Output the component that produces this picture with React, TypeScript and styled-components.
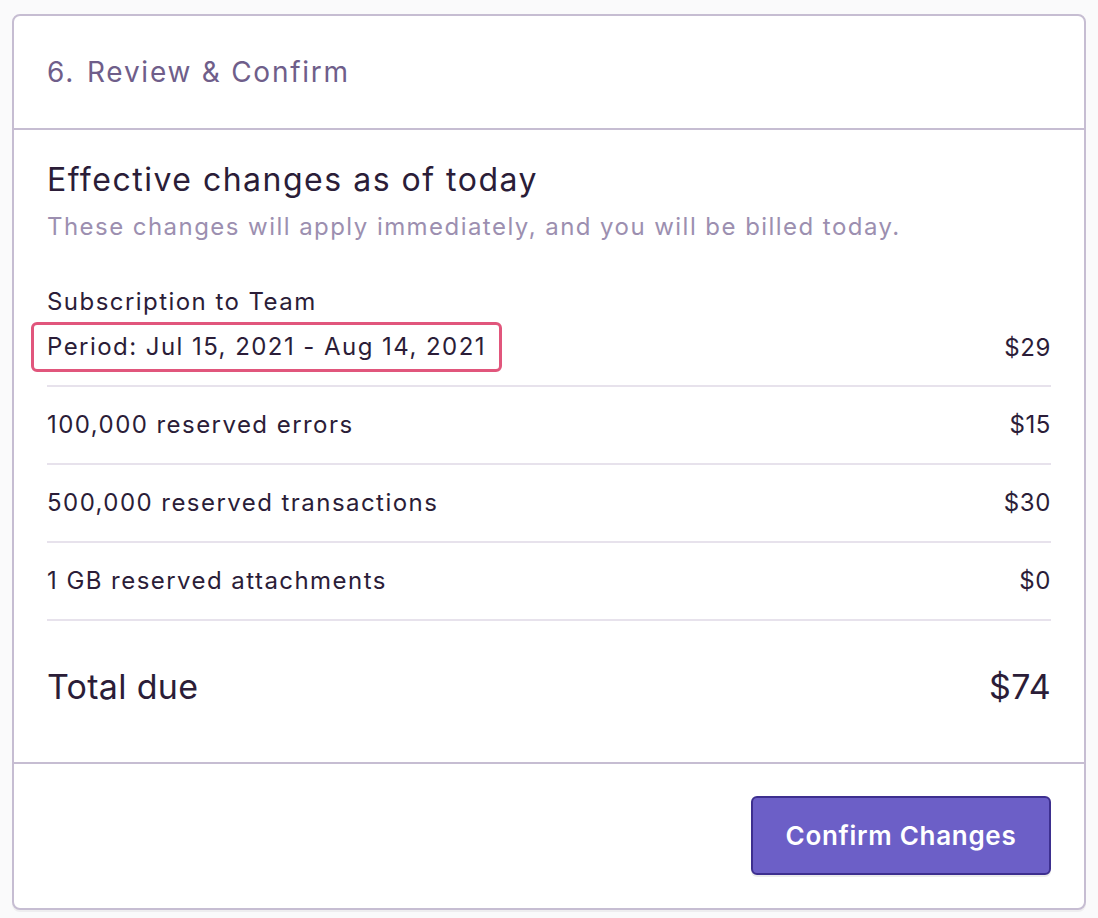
import React from "react";
import styled, { createGlobalStyle } from "styled-components";

const Global = createGlobalStyle`
  html, body { margin: 0; padding: 0; background: #fafafb; }
  body { font-family: Inter, "Noto Sans", sans-serif; color: #2b1d38; }
  * { box-sizing: border-box; }
`;

const Page = styled.div`
  padding: 14px 12px 6px 12px;
`;

const Card = styled.section`
  width: 1074px;
  background: #fff;
  border: 2px solid #c6bdd2;
  border-radius: 8px;
  box-shadow: 0 2px 0 rgba(43, 29, 56, 0.06);
  overflow: hidden;
`;

const Header = styled.header`
  height: 114px;
  display: flex;
  align-items: center;
  padding: 0 33px;
  border-bottom: 2px solid #c6bdd2;
  font-size: 28px;
  color: #6f5e8a;
  letter-spacing: 1.75px;
`;

const StepNum = styled.span`
  margin-right: 12px;
`;

const Body = styled.div`
  padding: 30px 33px 55px 33px;
`;

const Title = styled.h2`
  margin: 0;
  font-size: 32px;
  line-height: 40px;
  font-weight: 400;
  letter-spacing: 1.5px;
  color: #2b1d38;
`;

const Subtitle = styled.p`
  margin: 11px 0 0 0;
  font-size: 24px;
  line-height: 32px;
  letter-spacing: 1.45px;
  color: #9c8fb0;
`;

const List = styled.div`
  margin-top: 41px;
  display: flex;
  flex-direction: column;
`;

const Row = styled.div<{ $first?: boolean }>`
  display: flex;
  justify-content: space-between;
  align-items: flex-end;
  padding: ${(p) => (p.$first ? "0 0 13px 0" : "20px 0")};
  border-bottom: 2px solid #e7e2ec;
  font-size: 24px;
  line-height: 36px;
  letter-spacing: 1.45px;
`;

const Stack = styled.div`
  display: flex;
  flex-direction: column;
  align-items: flex-start;
`;

const Highlight = styled.span`
  display: inline-block;
  margin: 2px 0 0 -16px;
  padding: 4px 13px;
  border: 3px solid #e1567c;
  border-radius: 6px;
`;

const Price = styled.span<{ $pad?: number }>`
  padding-bottom: ${(p) => p.$pad ?? 0}px;
  letter-spacing: 0.6px;
`;

const TotalRow = styled.div`
  display: flex;
  justify-content: space-between;
  align-items: center;
  padding-top: 46px;
  font-size: 34px;
  line-height: 40px;
  letter-spacing: 0.3px;
`;

const Footer = styled.footer`
  display: flex;
  justify-content: flex-end;
  padding: 32px 33px 33px 33px;
  border-top: 2px solid #c6bdd2;
`;

const Button = styled.button`
  width: 300px;
  height: 79px;
  background: #6c5fc7;
  border: 2px solid #3d2f8f;
  border-radius: 6px;
  color: #fff;
  font-family: Inter, "Noto Sans", sans-serif;
  font-size: 26px;
  font-weight: 600;
  letter-spacing: 0.7px;
  box-shadow: 0 2px 0 rgba(0, 0, 0, 0.08);
  cursor: pointer;
`;

const items = [
  { label: "100,000 reserved errors", price: "$15" },
  { label: "500,000 reserved transactions", price: "$30" },
  { label: "1 GB reserved attachments", price: "$0" },
];

export default function App() {
  return (
    <Page>
      <Global />
      <Card>
        <Header>
          <StepNum>6.</StepNum>Review &amp; Confirm
        </Header>
        <Body>
          <Title>Effective changes as of today</Title>
          <Subtitle>
            These changes will apply immediately, and you will be billed today.
          </Subtitle>
          <List>
            <Row $first>
              <Stack>
                <span>Subscription to Team</span>
                <Highlight>Period: Jul 15, 2021 - Aug 14, 2021</Highlight>
              </Stack>
              <Price $pad={6}>$29</Price>
            </Row>
            {items.map((it) => (
              <Row key={it.label}>
                <span>{it.label}</span>
                <Price>{it.price}</Price>
              </Row>
            ))}
          </List>
          <TotalRow>
            <span>Total due</span>
            <span>$74</span>
          </TotalRow>
        </Body>
        <Footer>
          <Button>Confirm Changes</Button>
        </Footer>
      </Card>
    </Page>
  );
}
